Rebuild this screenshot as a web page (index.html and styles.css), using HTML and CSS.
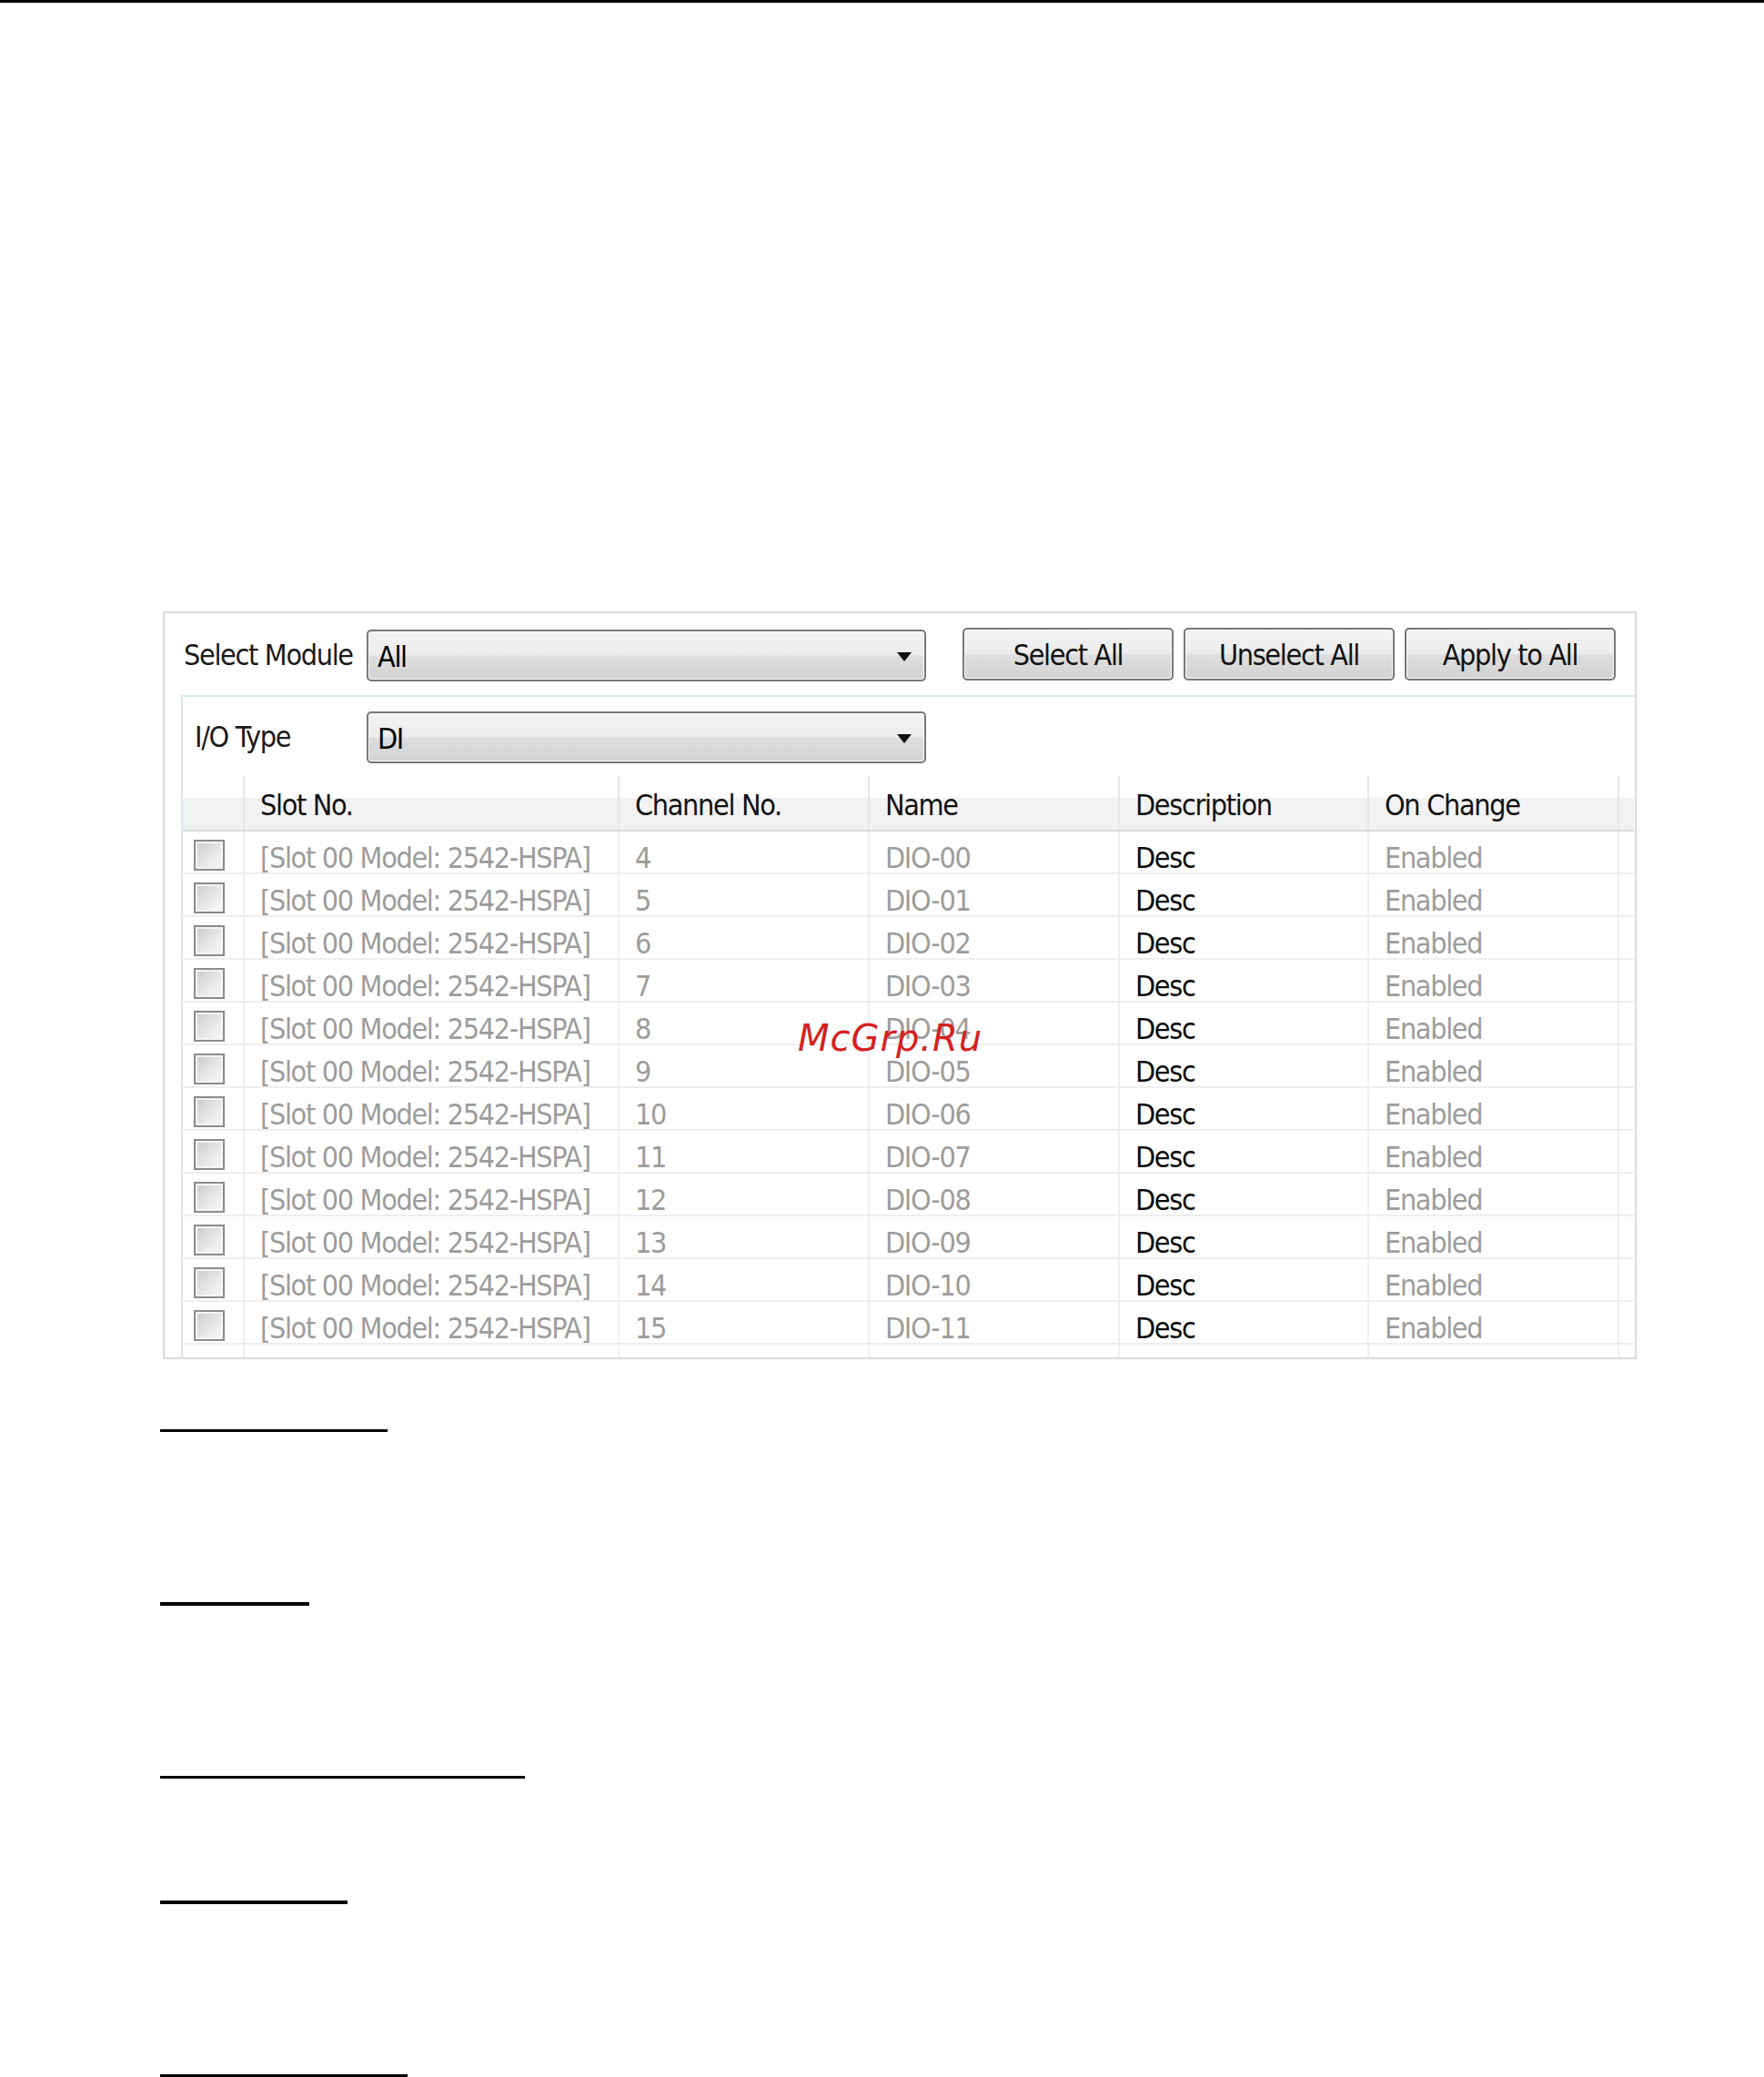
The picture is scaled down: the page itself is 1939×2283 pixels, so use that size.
FILE: index.html
```html
<!DOCTYPE html>
<html lang="en">
<head>
  <meta charset="UTF-8" />
  <title>I/O Channel Settings</title>
  <link rel="stylesheet" href="styles.css">
</head>
<body>
  <div class="topline"></div>

  <div class="panel">
    <div class="module-row">
      <span class="field-label">Select Module</span>
      <div class="combo">
        <span class="combo-text">All</span>
        <span class="combo-arrow"></span>
      </div>
      <div class="btn-group">
        <button class="win-btn">Select All</button>
        <button class="win-btn">Unselect All</button>
        <button class="win-btn">Apply to All</button>
      </div>
    </div>

    <div class="group">
      <div class="type-row">
        <span class="field-label type-label">I/O Type</span>
        <div class="combo">
          <span class="combo-text">DI</span>
          <span class="combo-arrow"></span>
        </div>
      </div>

      <table class="grid">
        <colgroup>
          <col class="c-check"><col class="c-slot"><col class="c-chan"><col class="c-name"><col class="c-desc"><col class="c-change"><col class="c-rest">
        </colgroup>
        <thead>
          <tr>
            <th></th>
            <th>Slot No.</th>
            <th>Channel No.</th>
            <th>Name</th>
            <th>Description</th>
            <th>On Change</th>
            <th></th>
          </tr>
        </thead>
        <tbody>
          <tr><td><span class="check"></span></td><td>[Slot 00 Model: 2542-HSPA]</td><td>4</td><td>DIO-00</td><td class="desc">Desc</td><td>Enabled</td><td></td></tr>
          <tr><td><span class="check"></span></td><td>[Slot 00 Model: 2542-HSPA]</td><td>5</td><td>DIO-01</td><td class="desc">Desc</td><td>Enabled</td><td></td></tr>
          <tr><td><span class="check"></span></td><td>[Slot 00 Model: 2542-HSPA]</td><td>6</td><td>DIO-02</td><td class="desc">Desc</td><td>Enabled</td><td></td></tr>
          <tr><td><span class="check"></span></td><td>[Slot 00 Model: 2542-HSPA]</td><td>7</td><td>DIO-03</td><td class="desc">Desc</td><td>Enabled</td><td></td></tr>
          <tr><td><span class="check"></span></td><td>[Slot 00 Model: 2542-HSPA]</td><td>8</td><td>DIO-04</td><td class="desc">Desc</td><td>Enabled</td><td></td></tr>
          <tr><td><span class="check"></span></td><td>[Slot 00 Model: 2542-HSPA]</td><td>9</td><td>DIO-05</td><td class="desc">Desc</td><td>Enabled</td><td></td></tr>
          <tr><td><span class="check"></span></td><td>[Slot 00 Model: 2542-HSPA]</td><td>10</td><td>DIO-06</td><td class="desc">Desc</td><td>Enabled</td><td></td></tr>
          <tr><td><span class="check"></span></td><td>[Slot 00 Model: 2542-HSPA]</td><td>11</td><td>DIO-07</td><td class="desc">Desc</td><td>Enabled</td><td></td></tr>
          <tr><td><span class="check"></span></td><td>[Slot 00 Model: 2542-HSPA]</td><td>12</td><td>DIO-08</td><td class="desc">Desc</td><td>Enabled</td><td></td></tr>
          <tr><td><span class="check"></span></td><td>[Slot 00 Model: 2542-HSPA]</td><td>13</td><td>DIO-09</td><td class="desc">Desc</td><td>Enabled</td><td></td></tr>
          <tr><td><span class="check"></span></td><td>[Slot 00 Model: 2542-HSPA]</td><td>14</td><td>DIO-10</td><td class="desc">Desc</td><td>Enabled</td><td></td></tr>
          <tr><td><span class="check"></span></td><td>[Slot 00 Model: 2542-HSPA]</td><td>15</td><td>DIO-11</td><td class="desc">Desc</td><td>Enabled</td><td></td></tr>
          <tr class="filler"><td></td><td></td><td></td><td></td><td></td><td></td><td></td></tr>
        </tbody>
      </table>
    </div>

    <div class="watermark">McGrp.Ru</div>
  </div>

  <div class="rule rule-1"></div>
  <div class="rule rule-2"></div>
  <div class="rule rule-3"></div>
  <div class="rule rule-4"></div>
  <div class="rule rule-5"></div>
</body>
</html>
```

FILE: styles.css
```css
body {
  margin: 0;
  padding: 0;
  background: #fff;
  font-family: "DejaVu Sans Condensed", "DejaVu Sans", sans-serif;
  font-size: 32px;
  letter-spacing: -1.3px;
  color: #1a1a1a;
}

.topline {
  height: 3px;
  background: #000;
}

.panel {
  position: relative;
  box-sizing: border-box;
  width: 1620px;
  height: 822px;
  margin: 669px 0 0 179px;
  border: 2px solid #dadada;
  overflow: hidden;
}

.module-row {
  display: flex;
  align-items: center;
  height: 60px;
  padding: 16px 0 0 21px;
}

.field-label {
  width: 201px;
  flex-shrink: 0;
}

.type-label {
  width: 189px;
}

.combo {
  box-sizing: border-box;
  display: flex;
  align-items: center;
  justify-content: space-between;
  width: 615px;
  height: 57px;
  padding: 4px 14px 0 10px;
  border: 2px solid #777;
  border-radius: 5px;
  background: linear-gradient(#f3f3f3, #ececec 48%, #dedede 52%, #d2d2d2);
  box-shadow: inset 0 0 0 1px #fbfbfb;
  color: #000;
}

.combo-arrow {
  width: 0;
  height: 0;
  border-left: 8px solid transparent;
  border-right: 8px solid transparent;
  border-top: 10px solid #111;
}

.btn-group {
  display: flex;
  gap: 11px;
  margin-left: 40px;
}

.win-btn {
  box-sizing: border-box;
  width: 232px;
  height: 58px;
  margin-top: -3px;
  padding: 2px 0 0;
  font: inherit;
  letter-spacing: inherit;
  color: #111;
  border: 2px solid #777;
  border-radius: 5px;
  background: linear-gradient(#f3f3f3, #ececec 48%, #dedede 52%, #d2d2d2);
  box-shadow: inset 0 0 0 1px #fbfbfb;
}

.group {
  margin: 14px 0 0 18px;
  height: 800px;
  border-top: 2px solid #d3eaec;
  border-left: 2px solid #d3eaec;
}

.type-row {
  display: flex;
  align-items: center;
  height: 56px;
  padding: 16px 0 0 13px;
}

.grid {
  margin-top: 15px;
  width: 1595px;
  table-layout: fixed;
  border-collapse: collapse;
}

.c-check { width: 67px; }
.c-slot { width: 412px; }
.c-chan { width: 275px; }
.c-name { width: 275px; }
.c-desc { width: 274px; }
.c-change { width: 275px; }
.c-rest { width: 17px; }

.grid th {
  padding: 15px 0 10px 17px;
  line-height: 34px;
  text-align: left;
  font-weight: normal;
  color: #111;
  background: linear-gradient(#fff 40%, #f2f2f2 40%);
  border-left: 2px solid #e6e6e6;
  border-bottom: 2px solid #d9d9d9;
}

.grid th:first-child,
.grid td:first-child {
  border-left: none;
}

.grid td {
  padding: 14px 0 0 17px;
  line-height: 31px;
  vertical-align: top;
  white-space: nowrap;
  color: #9c9c9c;
  border-left: 2px solid #efefef;
  border-bottom: 2px solid #eeeeee;
}

.grid td:first-child {
  padding: 9px 0 2px 12px;
  line-height: 0;
}

.grid .filler td {
  height: 31px;
}

.grid td.desc {
  color: #0a0a0a;
}

.check {
  display: block;
  box-sizing: border-box;
  width: 34px;
  height: 34px;
  border: 2px solid #8a8b8b;
  background: linear-gradient(135deg, #c9caca, #eeeeee 70%, #f7f7f7);
  box-shadow: inset 0 0 0 2px #f4f4f4;
}

.watermark {
  position: absolute;
  left: 696px;
  top: 447px;
  font-family: "DejaVu Sans", sans-serif;
  font-style: italic;
  font-size: 40px;
  line-height: 1;
  letter-spacing: 1px;
  color: #d42222;
}

.rule {
  margin-left: 176px;
  background: #000;
}

.rule-1 { width: 250px; height: 3px; margin-top: 77px; }
.rule-2 { width: 164px; height: 4px; margin-top: 187px; }
.rule-3 { width: 401px; height: 3px; margin-top: 187px; }
.rule-4 { width: 206px; height: 4px; margin-top: 134px; }
.rule-5 { width: 272px; height: 3px; margin-top: 187px; }
```
